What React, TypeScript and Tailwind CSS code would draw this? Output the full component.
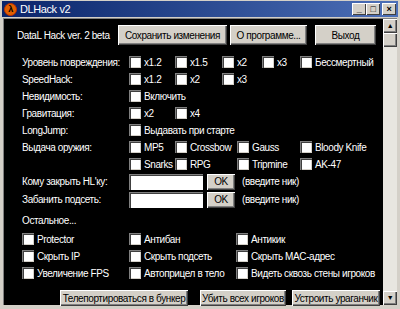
import React from "react";

const font = { fontFamily: '"Liberation Sans", Arial, sans-serif' };

function Box() {
  return (
    <span className="inline-block h-[12px] w-[12px] shrink-0 border-t border-l border-t-[#808080] border-l-[#808080] bg-white shadow-[inset_1px_1px_0_#404040,inset_-1px_-1px_0_#d4d0c8]" />
  );
}

function Check({ label, w }: { label: string; w: string }) {
  return (
    <div className={"flex items-center gap-[3px] " + w}>
      <Box />
      <span className="whitespace-nowrap">{label}</span>
    </div>
  );
}

function Btn({ children, className = "" }: { children: React.ReactNode; className?: string }) {
  return (
    <button
      className={
        "flex shrink-0 items-center justify-center whitespace-nowrap bg-[#d4d0c8] text-black shadow-[inset_1px_1px_0_#ffffff,inset_-1px_-1px_0_#404040,inset_-2px_-2px_0_#808080] " +
        className
      }
    >
      {children}
    </button>
  );
}

function Row({ label, children, className = "" }: { label: string; children?: React.ReactNode; className?: string }) {
  return (
    <div className={"flex items-center " + className}>
      <div className="w-[107px] shrink-0 whitespace-nowrap">{label}</div>
      {children}
    </div>
  );
}

function Ti({ children }: { children: React.ReactNode }) {
  return (
    <span className="flex h-[12px] w-[14px] items-center justify-center bg-[#d4d0c8] text-[9px] font-bold leading-none text-black shadow-[inset_1px_1px_0_#ffffff,inset_-1px_-1px_0_#404040]">
      {children}
    </span>
  );
}

function NickRow({ label }: { label: string }) {
  return (
    <Row label={label} className="h-[15px]">
      <span className="h-[16px] w-[74px] shrink-0 bg-white shadow-[inset_1px_1px_0_#808080,inset_2px_2px_0_#404040]" />
      <Btn className="ml-[4px] h-[16px] w-[28px]">OK</Btn>
      <span className="ml-[7px] whitespace-nowrap">(введите ник)</span>
    </Row>
  );
}

export default function App() {
  return (
    <div
      className="h-[309px] w-[400px] overflow-hidden bg-[#d4d0c8] text-[10px] tracking-[-0.4px] text-white"
      style={font}
    >
      {/* title bar */}
      <div className="mx-[2px] mt-[1px] flex h-[16px] items-center bg-gradient-to-r from-[#0a246a] to-[#4d70b8] px-[2px]">
        <span className="flex h-[13px] w-[13px] items-center justify-center rounded-full border border-[#c03000] bg-[#e06000] text-[9px] font-bold leading-none text-black">
          λ
        </span>
        <span className="ml-[3px] text-[11px]">DLHack v2</span>
        <div className="ml-auto flex">
          <Ti>_</Ti>
          <Ti>□</Ti>
          <span className="ml-[2px]">
            <Ti>×</Ti>
          </span>
        </div>
      </div>

      <div className="mx-[3px] mt-[1px] flex h-[287px] border-t border-l border-[#808080]">
        {/* content */}
        <div className="flex-1 bg-black pl-[18px]">
          <div className="flex h-[26px] items-center pt-[6px]">
            <span className="-ml-[5px] w-[101px] shrink-0 whitespace-nowrap">DataL Hack ver. 2 beta</span>
            <Btn className="h-[20px] w-[109px]">Сохранить изменения</Btn>
            <Btn className="ml-[3px] h-[20px] w-[77px]">О программе...</Btn>
            <Btn className="ml-[8px] h-[20px] w-[61px]">Выход</Btn>
          </div>

          <div className="mt-[10px] flex flex-col gap-[3px]">
            <Row label="Уровень повреждения:" className="h-[14px]">
              <Check label="x1.2" w="w-[46px]" />
              <Check label="x1.5" w="w-[47px]" />
              <Check label="x2" w="w-[40px]" />
              <Check label="x3" w="w-[38px]" />
              <Check label="Бессмертный" w="" />
            </Row>
            <Row label="SpeedHack:" className="h-[14px]">
              <Check label="x1.2" w="w-[46px]" />
              <Check label="x2" w="w-[47px]" />
              <Check label="x3" w="" />
            </Row>
            <Row label="Невидимость:" className="h-[14px]">
              <Check label="Включить" w="" />
            </Row>
            <Row label="Гравитация:" className="h-[14px]">
              <Check label="x2" w="w-[46px]" />
              <Check label="x4" w="" />
            </Row>
            <Row label="LongJump:" className="h-[14px]">
              <Check label="Выдавать при старте" w="" />
            </Row>
            <Row label="Выдача оружия:" className="h-[14px]">
              <Check label="MP5" w="w-[46px]" />
              <Check label="Crossbow" w="w-[62px]" />
              <Check label="Gauss" w="w-[63px]" />
              <Check label="Bloody Knife" w="" />
            </Row>
            <Row label="" className="h-[14px]">
              <Check label="Snarks" w="w-[46px]" />
              <Check label="RPG" w="w-[62px]" />
              <Check label="Tripmine" w="w-[63px]" />
              <Check label="AK-47" w="" />
            </Row>
            <NickRow label="Кому закрыть HL'ку:" />
            <NickRow label="Забанить подсеть:" />
          </div>

          <div className="mt-[6px] flex h-[14px] items-center">Остальное...</div>
          <div className="mt-[5px] flex flex-col gap-[3px]">
            <div className="flex h-[14px]">
              <Check label="Protector" w="w-[107px]" />
              <Check label="Антибан" w="w-[107px]" />
              <Check label="Антикик" w="" />
            </div>
            <div className="flex h-[14px]">
              <Check label="Скрыть IP" w="w-[107px]" />
              <Check label="Скрыть подсеть" w="w-[107px]" />
              <Check label="Скрыть MAC-адрес" w="" />
            </div>
            <div className="flex h-[14px]">
              <Check label="Увеличение FPS" w="w-[107px]" />
              <Check label="Автоприцел в тело" w="w-[107px]" />
              <Check label="Видеть сквозь стены игроков" w="" />
            </div>
          </div>

          <div className="mt-[10px] flex pl-[38px]">
            <Btn className="h-[16px] w-[128px]">Телепортироваться в бункер</Btn>
            <Btn className="ml-[12px] h-[16px] w-[86px]">Убить всех игроков</Btn>
            <Btn className="ml-[6px] h-[16px] w-[88px]">Устроить ураганчик</Btn>
          </div>
        </div>

        {/* scrollbar */}
        <div className="flex w-[14px] flex-col bg-[#e8e6e0]">
          <Btn className="h-[14px] w-[14px] text-[7px]">▲</Btn>
          <Btn className="h-[14px] w-[14px]">{""}</Btn>
          <div className="flex-1" />
          <Btn className="h-[14px] w-[14px] text-[7px]">▼</Btn>
        </div>
      </div>
    </div>
  );
}
